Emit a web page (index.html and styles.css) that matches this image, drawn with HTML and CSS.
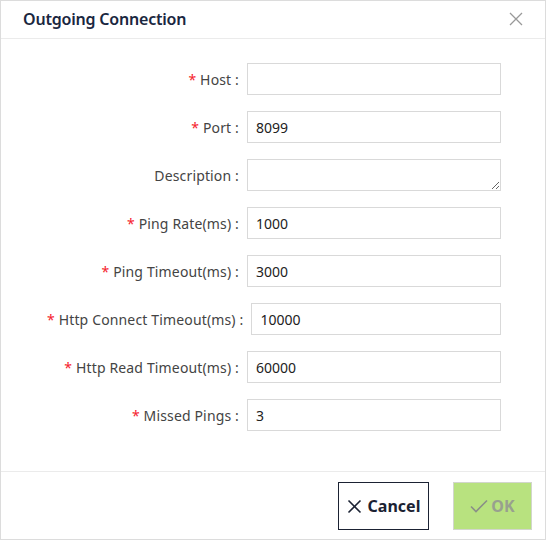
FILE: index.html
```html
<!DOCTYPE html>
<html>
<head>
<meta charset="utf-8">
<link rel="stylesheet" href="styles.css">
</head>
<body>
<div class="dialog">
  <div class="header">
    <div class="title">Outgoing Connection</div>
    <svg class="close" width="14" height="14" viewBox="0 0 14 14"><path d="M1 1L13 13M13 1L1 13" stroke="#999" stroke-width="1.3" fill="none"/></svg>
  </div>
  <div class="body">
    <div class="row"><label class="lbl"><span class="req">*</span> Host :</label><input class="inp" type="text" value=""></div>
    <div class="row"><label class="lbl"><span class="req">*</span> Port :</label><input class="inp" type="text" value="8099"></div>
    <div class="row"><label class="lbl">Description :</label><textarea class="inp ta"></textarea></div>
    <div class="row"><label class="lbl"><span class="req">*</span> Ping Rate(ms) :</label><input class="inp" type="text" value="1000"></div>
    <div class="row"><label class="lbl"><span class="req">*</span> Ping Timeout(ms) :</label><input class="inp" type="text" value="3000"></div>
    <div class="row"><label class="lbl"><span class="req">*</span> Http Connect Timeout(ms) :</label><input class="inp" type="text" value="10000"></div>
    <div class="row"><label class="lbl"><span class="req">*</span> Http Read Timeout(ms) :</label><input class="inp" type="text" value="60000"></div>
    <div class="row"><label class="lbl"><span class="req">*</span> Missed Pings :</label><input class="inp" type="text" value="3"></div>
  </div>
  <div class="footer">
    <button class="btn cancel"><svg width="15" height="15" viewBox="0 0 15 15"><path d="M1.5 1.5L13.5 13.5M13.5 1.5L1.5 13.5" stroke="#1b2233" stroke-width="1.6" fill="none"/></svg>Cancel</button>
    <button class="btn ok"><svg width="18" height="14" viewBox="0 0 18 14"><path d="M1 7.5L6 12.5L17 1.5" stroke="#8a8f88" stroke-width="1.6" fill="none"/></svg>OK</button>
  </div>
</div>
</body>
</html>
```
FILE: styles.css
```css
* { box-sizing: border-box; }
body { margin: 0; background: #fff; font-family: "Noto Sans", "Open Sans", sans-serif; }
.dialog { width: 546px; height: 540px; border: 1px solid #dcdcdc; display: flex; flex-direction: column; background: #fff; }
.header { height: 38px; border-bottom: 1px solid #ebebeb; display: flex; align-items: center; justify-content: space-between; padding: 0 22px 0 22px; flex-shrink: 0; }
.title { font-size: 16px; font-weight: 600; color: #1a2740; line-height: 20px; margin-top: -1px; letter-spacing: -0.2px; }
.close { margin-top: -1px; }
.body { padding: 24px 0 0 46px; display: flex; flex-direction: column; gap: 16px; flex: 1; }
.row { display: flex; align-items: center; height: 32px; width: 454px; }
.lbl { min-width: 192px; flex-shrink: 0; text-align: right; font-size: 14px; color: #444; margin-right: 8px; white-space: nowrap; letter-spacing: 0.15px; }
.req { color: #f5222d; }
.inp { flex: 1; height: 32px; border: 1px solid #d9d9d9; border-radius: 0; padding: 0 8px; font-family: "Noto Sans", sans-serif; font-size: 14px; color: #222; outline: none; min-width: 0; }
.ta { resize: vertical; padding: 4px 8px; display: block; }
.footer { height: 68px; border-top: 1px solid #ebebeb; display: flex; justify-content: flex-end; align-items: flex-start; padding: 10px 13px 0 0; gap: 24px; flex-shrink: 0; }
.btn { height: 48px; display: flex; align-items: center; justify-content: center; gap: 6px; font-family: "Noto Sans", sans-serif; font-size: 16px; font-weight: 700; cursor: pointer; }
.cancel { width: 91px; background: #fff; border: 1.5px solid #1b2233; color: #1b2233; }
.ok { width: 79px; background: #b8e27f; border: 1px solid #d2d6cc; color: #98a08f; gap: 3px; }
```
